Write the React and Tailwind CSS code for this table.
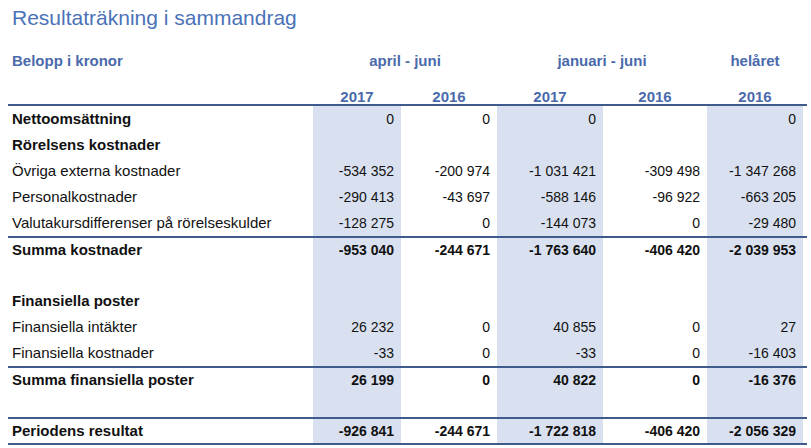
const rows = [
  { label: "Nettoomsättning", bold: true, values: ["0", "0", "0", "", "0"], h: "h-[26px]" },
  { label: "Rörelsens kostnader", bold: true, values: ["", "", "", "", ""], h: "h-[26px]" },
  { label: "Övriga externa kostnader", values: ["-534 352", "-200 974", "-1 031 421", "-309 498", "-1 347 268"], h: "h-[26px]" },
  { label: "Personalkostnader", values: ["-290 413", "-43 697", "-588 146", "-96 922", "-663 205"], h: "h-[26px]" },
  { label: "Valutakursdifferenser på rörelseskulder", values: ["-128 275", "0", "-144 073", "0", "-29 480"], h: "h-[26px]" },
  { line: true },
  { label: "Summa kostnader", bold: true, boldValues: true, values: ["-953 040", "-244 671", "-1 763 640", "-406 420", "-2 039 953"], h: "h-[25px]" },
  { label: "", values: ["", "", "", "", ""], h: "h-[25px]" },
  { label: "Finansiella poster", bold: true, values: ["", "", "", "", ""], h: "h-[26px]" },
  { label: "Finansiella intäkter", values: ["26 232", "0", "40 855", "0", "27"], h: "h-[26px]" },
  { label: "Finansiella kostnader", values: ["-33", "0", "-33", "0", "-16 403"], h: "h-[26px]" },
  { line: true },
  { label: "Summa finansiella poster", bold: true, boldValues: true, values: ["26 199", "0", "40 822", "0", "-16 376"], h: "h-[25px]" },
  { label: "", values: ["", "", "", "", ""], h: "h-[24px]" },
  { line: true },
  { label: "Periodens resultat", bold: true, boldValues: true, values: ["-926 841", "-244 671", "-1 722 818", "-406 420", "-2 056 329"], h: "h-[24px]" },
  { line: true },
]

const grid = "grid grid-cols-[305px_88px_96px_106px_104px_96px_4px]"
const shaded = [true, false, true, false, true]

export default function App() {
  return (
    <div className="w-[811px] h-[448px] bg-white overflow-hidden font-['Liberation_Sans',Arial,sans-serif] text-[#111]">
      <div className="h-[36px] pl-[12px] flex items-center text-[21px] text-[#4b72b8]">
        Resultaträkning i sammandrag
      </div>

      <div className="ml-[8px] w-[799px]">
        {/* Header */}
        <div className={`${grid} h-[50px] items-center text-[15px] font-bold text-[#4a6aab]`}>
          <div className="pl-[4px]">Belopp i kronor</div>
          <div className="col-span-2 text-center">april - juni</div>
          <div className="col-span-2 text-center">januari - juni</div>
          <div className="text-center">helåret</div>
          <div />
        </div>
        <div className={`${grid} h-[18px] items-center text-[15px] font-bold text-[#4a6aab]`}>
          <div />
          <div className="text-center">2017</div>
          <div className="text-center">2016</div>
          <div className="text-center">2017</div>
          <div className="text-center">2016</div>
          <div className="text-center">2016</div>
          <div />
        </div>
        <div className="h-[2px] bg-[#3f5b8c]" />

        {rows.map((row, i) =>
          row.line ? (
            <div key={i} className="h-[2px] bg-[#3f5b8c]" />
          ) : (
            <div key={i} className={`${grid} ${row.h} text-[14px]`}>
              <div className={`pl-[4px] flex items-center text-[15px] ${row.bold ? "font-bold" : ""}`}>{row.label}</div>
              {row.values.map((v, j) => (
                <div
                  key={j}
                  className={`flex items-center justify-end pr-[7px] ${shaded[j] ? "bg-[#d9e1f0]" : ""} ${row.boldValues ? "font-bold" : ""}`}
                >
                  {v}
                </div>
              ))}
              <div />
            </div>
          )
        )}
      </div>
    </div>
  )
}
